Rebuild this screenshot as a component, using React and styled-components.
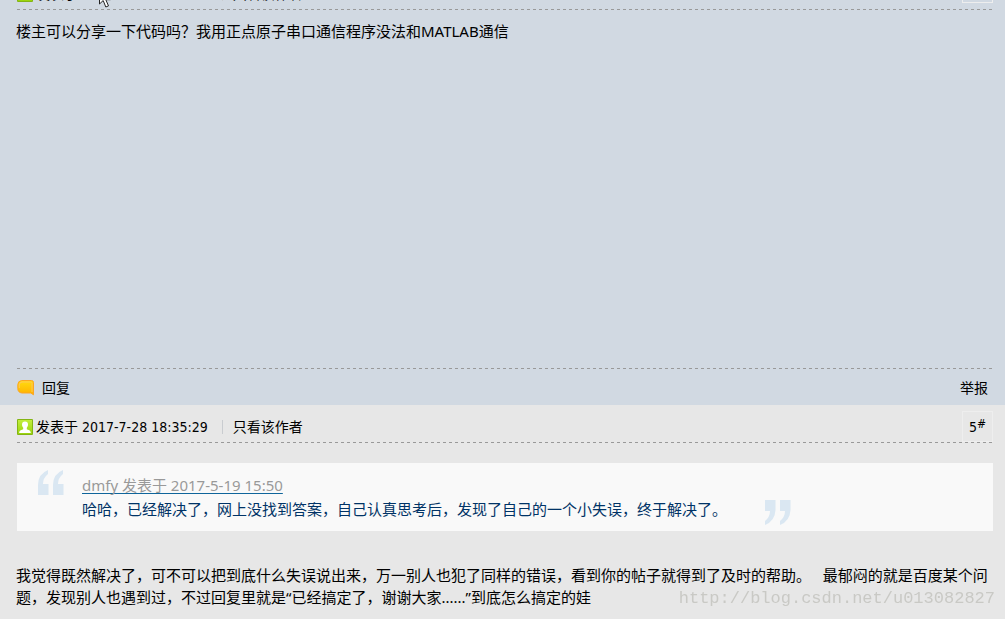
import React, { Component } from "react";
import styled, { createGlobalStyle } from "styled-components";

const COLORS = {
  TEXT: "#000",
  POST_BLUE: "#d1d9e2",
  POST_GREY: "#e7e7e7",
  DASH: "#999",
  QUOTE_BG: "#f9f9f9",
  QUOTE_MARK: "#dae7f2",
  QUOTE_TEXT: "#036",
  QUOTE_LINK: "#999",
  UNDERLINE: "#0f659b",
  WATERMARK: "#c9c9c5"
};

const GlobalStyle = createGlobalStyle`
  * {
    box-sizing: border-box;
  }

  html, body {
    margin: 0;
    height: 100%;
    overflow: hidden;
  }

  body {
    background: ${COLORS.POST_GREY};
    color: ${COLORS.TEXT};
    font: 14px/22px "Noto Sans", "Noto Sans CJK SC", sans-serif;
  }

  p {
    margin: 0;
  }
`;

// the list is scrolled, so the first header is partly out of view
const Thread = styled.main`
  margin-top: -28px;
`;

const Post = styled.article`
  padding: 0 12px 0 16px;
  background: ${props => props.color};
`;

const DASHES = `repeating-linear-gradient(
  90deg,
  ${COLORS.DASH} 0 3px,
  transparent 3px 6px
)`;

const PostHeader = styled.header`
  display: flex;
  align-items: center;
  height: 38px;
  padding: 6px 0 0 1px;
  background: ${DASHES} left 1px bottom / 100% 1px no-repeat;
  font-family: "DejaVu Sans Condensed", "Noto Sans CJK SC", sans-serif;
`;

const PostDate = styled.span`
  margin-left: 3px;
`;

const Divider = styled.span`
  width: 1px;
  height: 14px;
  margin: 0 10px 0 14px;
  background: #c9ccd0;
`;

const TextLink = styled.a`
  color: inherit;
  text-decoration: none;
`;

const Floor = styled.a`
  align-self: flex-end;
  width: 31px;
  height: 31px;
  margin: 0 0 ${props => (props.$raised ? 7 : 1)}px auto;
  padding-left: 6px;
  border: 1px solid ${props => props.color};
  color: inherit;
  line-height: 31px;
  text-decoration: none;

  sup {
    font-size: 12px;
    line-height: 0;
    vertical-align: 4px;
  }
`;

const PostBody = styled.div`
  min-height: ${props => props.$minHeight || 0}px;
  padding-top: 10px;
  font-size: 15px;
`;

const PostFooter = styled.footer`
  display: flex;
  align-items: center;
  height: 37px;
  padding: 2px 5px 0 1px;
  background: ${DASHES} left 1px top / 100% 1px no-repeat;
`;

const ReplyLink = styled(TextLink)`
  display: flex;
  align-items: center;
  gap: 8px;
  margin-right: auto;
`;

const Quote = styled.blockquote`
  display: flex;
  margin: 10px 0 33px 1px;
  padding: 7px 20px 6px;
  background: ${COLORS.QUOTE_BG};
  color: ${COLORS.QUOTE_TEXT};
  line-height: 24px;
`;

const QuoteText = styled.div`
  margin: 3px 37px 4px 17px;
`;

const QuoteLink = styled.a`
  color: ${COLORS.QUOTE_LINK};
  text-decoration: underline;
  text-decoration-color: ${COLORS.UNDERLINE};
  text-decoration-skip-ink: none;
  text-underline-offset: 2px;
`;

const QuoteMark = styled.svg`
  flex: none;
  align-self: ${props => (props.$closing ? "flex-end" : "flex-start")};
  width: 28px;
  height: 25px;
  fill: ${COLORS.QUOTE_MARK};
`;

const Watermark = styled.div`
  position: fixed;
  right: 10px;
  bottom: 8px;
  color: ${COLORS.WATERMARK};
  font: 17px/24px "Liberation Mono", monospace;
`;

const Pointer = styled.svg`
  position: fixed;
  top: -13px;
  left: 98px;
`;

const UserIcon = () => (
  <svg width="16" height="16" viewBox="0 0 16 16">
    <defs>
      <linearGradient id="leaf" x1="0" y1="0" x2="0" y2="1">
        <stop offset="0" stopColor="#c2ee3c" />
        <stop offset="1" stopColor="#9ad40c" />
      </linearGradient>
    </defs>
    <rect width="16" height="16" rx="1" fill="#84b414" />
    <rect x="1" y="1" width="14" height="14" fill="url(#leaf)" />
    <path
      d="M8 2.500c2 0 3 1.300 3 3.100 0 1.400-.5 2.400-1.200 3.100v1.600c1.400.6 4 .9 4 3.700H2.200c0-2.800 2.600-3.100 4-3.700V8.700C5.500 8 5 7 5 5.600 5 3.800 6 2.500 8 2.500z"
      fill="#fff"
    />
  </svg>
);

const ReplyIcon = () => (
  <svg width="17" height="16" viewBox="0 0 17 16">
    <defs>
      <linearGradient id="bubble" x1="0" y1="0" x2="0" y2="1">
        <stop offset="0" stopColor="#ffdc10" />
        <stop offset="1" stopColor="#ffb000" />
      </linearGradient>
    </defs>
    <path
      d="M4.500.5h10q2 0 2 2v12.300L13.800 13H5Q.8 12.500.8 8.500V4.500Q1 1 4.500.5z"
      fill="url(#bubble)"
      stroke="#fba524"
    />
    <path d="M15 12V3.500Q15 2 13.500 2H5Q2.300 2.200 2.300 5v3" fill="none" stroke="#ffc75a" />
  </svg>
);

class Header extends Component {
  render() {
    const { date, floor, frame, raised } = this.props;
    return (
      <PostHeader>
        <UserIcon />
        <PostDate>发表于 {date}</PostDate>
        <Divider />
        <TextLink href="#author">只看该作者</TextLink>
        <Floor href="#floor" color={frame} $raised={raised}>
          {floor}
          <sup>#</sup>
        </Floor>
      </PostHeader>
    );
  }
}

class App extends Component {
  render() {
    return (
      <>
        <GlobalStyle />
        <Thread>
          <Post color={COLORS.POST_BLUE}>
            <Header date="2017-7-27 16:20:11" floor={4} frame="#eee" raised />
            <PostBody $minHeight={358}>
              <p>楼主可以分享一下代码吗？我用正点原子串口通信程序没法和MATLAB通信</p>
            </PostBody>
            <PostFooter>
              <ReplyLink href="#reply">
                <ReplyIcon />
                回复
              </ReplyLink>
              <TextLink href="#report">举报</TextLink>
            </PostFooter>
          </Post>
          <Post color={COLORS.POST_GREY}>
            <Header date="2017-7-28 18:35:29" floor={5} frame="#eee" />
            <PostBody>
              <Quote>
                <QuoteMark viewBox="0 0 28 25">
                  <path d="M11 0v4Q6 8 6 14h5.500v11H1V15Q1 4 11 0zM26 0v4q-5 4-5 10h5.500v11H16V15Q16 4 26 0z" />
                </QuoteMark>
                <QuoteText>
                  <QuoteLink href="#quoted">dmfy 发表于 2017-5-19 15:50</QuoteLink>
                  <p>哈哈，已经解决了，网上没找到答案，自己认真思考后，发现了自己的一个小失误，终于解决了。</p>
                </QuoteText>
                <QuoteMark $closing viewBox="0 0 28 25">
                  <path d="M1 25v-4q5-4 5-10H1V0h10.500v10Q11 21 1 25zM16 25v-4q5-4 5-10h-5V0h10.500v10Q26 21 16 25z" />
                </QuoteMark>
              </Quote>
              <p>
                我觉得既然解决了，可不可以把到底什么失误说出来，万一别人也犯了同样的错误，看到你的帖子就得到了及时的帮助。&nbsp;&nbsp;&nbsp;最郁闷的就是百度某个问题，发现别人也遇到过，不过回复里就是“已经搞定了，谢谢大家......”到底怎么搞定的娃
              </p>
            </PostBody>
          </Post>
        </Thread>
        <Watermark>http://blog.csdn.net/u013082827</Watermark>
        <Pointer width="14" height="22" viewBox="0 0 14 22">
          <path
            d="M1.500 1.500v15.500l3.700-3.500 2.600 6.500 2.700-1.100-2.700-6.200h4.700z"
            fill="#fff"
            stroke="#222"
          />
        </Pointer>
      </>
    );
  }
}

export default App;
